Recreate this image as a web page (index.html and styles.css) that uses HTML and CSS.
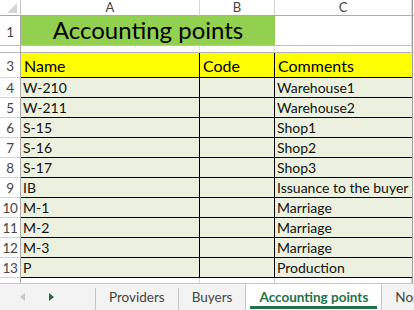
FILE: index.html
```html
<!DOCTYPE html>
<html>
<head>
    <title>Accounting points</title>
    <meta charset="UTF-8">
    <link rel="stylesheet" href="styles.css">
</head>
<body>
    <div class="sheet">
        <div class="grid">
            <div class="corner">
                <svg width="20" height="15" viewBox="0 0 20 15"><polygon points="17,3 17,13 7,13" fill="#d6d6d6"/></svg>
            </div>
            <div class="col-head">A</div>
            <div class="col-head">B</div>
            <div class="col-head">C</div>
            <div class="edge head-edge"></div>

            <div class="row-head r1">1</div>
            <div class="title">Accounting points</div>
            <div class="blank r1"></div>
            <div class="edge r1"></div>

            <div class="row-head r2"></div>
            <div class="blank r2"></div>
            <div class="blank r2"></div>
            <div class="blank r2"></div>
            <div class="edge r2"></div>

            <div class="row-head r3">3</div>
            <div class="cap">Name</div>
            <div class="cap">Code</div>
            <div class="cap last">Comments</div>
            <div class="edge r3"></div>

            <div class="row-head">4</div><div class="cell">W-210</div><div class="cell"></div><div class="cell last">Warehouse1</div><div class="edge"></div>
            <div class="row-head">5</div><div class="cell">W-211</div><div class="cell"></div><div class="cell last">Warehouse2</div><div class="edge"></div>
            <div class="row-head">6</div><div class="cell">S-15</div><div class="cell"></div><div class="cell last">Shop1</div><div class="edge"></div>
            <div class="row-head">7</div><div class="cell">S-16</div><div class="cell"></div><div class="cell last">Shop2</div><div class="edge"></div>
            <div class="row-head">8</div><div class="cell">S-17</div><div class="cell"></div><div class="cell last">Shop3</div><div class="edge"></div>
            <div class="row-head">9</div><div class="cell">IB</div><div class="cell"></div><div class="cell last">Issuance to the buyer</div><div class="edge"></div>
            <div class="row-head">10</div><div class="cell">M-1</div><div class="cell"></div><div class="cell last">Marriage</div><div class="edge"></div>
            <div class="row-head">11</div><div class="cell">M-2</div><div class="cell"></div><div class="cell last">Marriage</div><div class="edge"></div>
            <div class="row-head">12</div><div class="cell">M-3</div><div class="cell"></div><div class="cell last">Marriage</div><div class="edge"></div>
            <div class="row-head">13</div><div class="cell">P</div><div class="cell"></div><div class="cell last">Production</div><div class="edge"></div>

            <div class="row-head r14"></div>
            <div class="blank r14"></div>
            <div class="blank r14"></div>
            <div class="blank r14"></div>
            <div class="edge r14"></div>
        </div>
    </div>

    <div class="tabs">
        <div class="nav">
            <svg width="8" height="10" viewBox="0 0 8 10"><polygon points="6,1 6,9 1,5" fill="#c8c8c8"/></svg>
            <svg width="8" height="10" viewBox="0 0 8 10"><polygon points="2,1 2,9 7,5" fill="#1e6b3e"/></svg>
        </div>
        <div class="tab">Providers</div>
        <div class="tab">Buyers</div>
        <div class="tab active">Accounting points</div>
        <div class="tab">Nomenclature</div>
    </div>
</body>
</html>
```

FILE: styles.css
```css
body {
    margin: 0;
    width: 414px;
    height: 310px;
    overflow: hidden;
    background-color: white;
    font-family: Lato, "Liberation Sans", sans-serif;
}
.sheet {
    height: 283px;
    overflow: hidden;
}
.grid {
    display: grid;
    grid-template-columns: 21px 179px 75px 137px 2px;
    grid-template-rows: 16px 30px 7px 25px repeat(10, 20px) 6px;
}
.grid > div {
    box-sizing: border-box;
    overflow: hidden;
    white-space: nowrap;
}
.corner {
    border-right: 1px solid #c6c6c6;
    border-bottom: 1px solid #ababab;
}
.corner svg {
    display: block;
}
.col-head {
    font-size: 13px;
    color: #444;
    text-align: center;
    line-height: 15px;
    border-right: 1px solid #d4d4d4;
    border-bottom: 1px solid #ababab;
}
.head-edge {
    border-bottom: 1px solid #ababab;
}
.edge {
    border-left: 1px solid #9b9b9b;
}
.row-head {
    font-size: 13.5px;
    letter-spacing: -0.3px;
    color: #444;
    text-align: center;
    line-height: 20px;
    border-right: 1px solid #ababab;
    border-bottom: 1px solid #d4d4d4;
}
.row-head.r1 {
    line-height: 32px;
}
.row-head.r3 {
    line-height: 26px;
}
.r1 {
    border-bottom: 1px solid #c0c0c0;
}
.r2 {
    border-bottom: 1px solid #b4b4b4;
}
.blank {
    border-right: 1px solid #d4d4d4;
}
.blank.r2 {
    border-right: 1px solid #e2e2e2;
}
.title {
    grid-column: span 2;
    background-color: #92d050;
    font-size: 24px;
    text-align: center;
    line-height: 28px;
    color: #000;
    border-bottom: 1px solid #c0c0c0;
}
.cap {
    background-color: #ffff00;
    font-size: 16px;
    line-height: 26px;
    padding-left: 3px;
    border-right: 1px solid #000;
    border-bottom: 1px solid #000;
    color: #000;
}
.cell {
    background-color: #ebf1de;
    font-size: 14px;
    line-height: 20px;
    padding-left: 2px;
    border-right: 1px solid #000;
    border-bottom: 1px solid #000;
    color: #111;
}
.cell.last, .cap.last {
    border-right: none;
}
.tabs {
    height: 27px;
    box-sizing: border-box;
    border-top: 1px solid #c6c6c6;
    background-color: #f3f3f3;
    display: flex;
    align-items: stretch;
    font-size: 13.5px;
    color: #444;
    white-space: nowrap;
    overflow: hidden;
}
.nav {
    flex: none;
    width: 96px;
    display: flex;
    align-items: center;
    gap: 20px;
    padding-left: 19px;
    box-sizing: border-box;
    border-right: 1px solid #c6c6c6;
    margin-top: 4px;
}
.nav svg {
    display: block;
    margin-top: -4px;
}
.tab {
    flex: none;
    padding: 0 13px;
    display: flex;
    align-items: center;
    border-right: 1px solid #c6c6c6;
    margin-top: 4px;
    padding-bottom: 4px;
}
.tab.active {
    margin-top: -1px;
    margin-left: -1px;
    background-color: white;
    color: #217346;
    font-weight: bold;
    border-left: 1px solid #c6c6c6;
    position: relative;
    padding-bottom: 0;
}
.tab.active::after {
    content: "";
    position: absolute;
    left: 4px;
    right: 4px;
    bottom: 1px;
    height: 3px;
    background-color: #217346;
}
```
